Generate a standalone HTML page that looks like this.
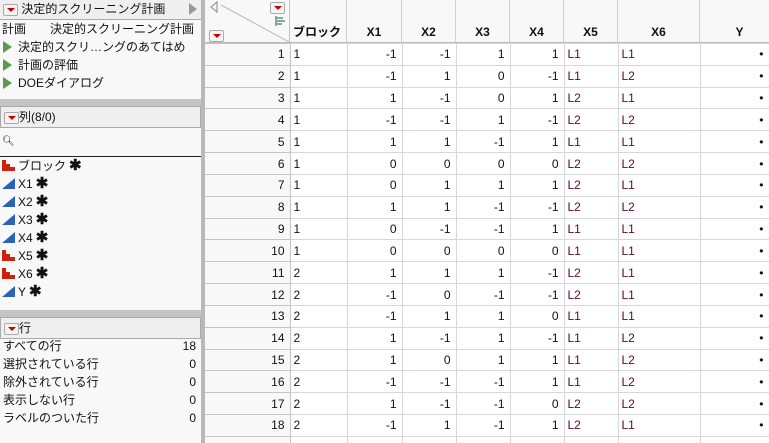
<!DOCTYPE html>
<html><head><meta charset="utf-8"><style>
*{margin:0;padding:0;box-sizing:border-box}
html{width:769px;height:443px;overflow:hidden}
body{width:769px;height:443px;overflow:hidden;background:#f8f8f8;font-family:"Liberation Sans","Noto Sans CJK JP",sans-serif;font-size:12px;color:#111;position:relative}
.abs{position:absolute}
.tri{display:inline-block;width:15px;height:12px;border:1px solid #aaa;border-radius:2px;background:#f4f4f4;position:relative;vertical-align:middle}
.tri:after{content:"";position:absolute;left:3px;top:3px;border-left:4px solid transparent;border-right:4px solid transparent;border-top:4.5px solid #c00}
.hdr{background:#efefef;border-bottom:1px solid #aaa;height:21px;line-height:20px;padding-left:3px;font-size:12px}
.gt{display:inline-block;width:0;height:0;border-top:6px solid transparent;border-bottom:6px solid transparent;border-left:9px solid #5a9a4a;margin:0 6px 0 3px;vertical-align:-2px}
.cl{height:18px;line-height:18px;white-space:nowrap}
.bar{display:inline-block;width:13px;height:11px;position:relative;vertical-align:-1px;margin-right:3px}
.cont{display:inline-block;width:0;height:0;border-left:13px solid transparent;border-bottom:11px solid #2a62b8;vertical-align:-1px;margin-right:3px}
.star{font-weight:bold;font-size:15px;margin-left:3px}
.wrap{position:absolute;left:205px;top:43px;width:564px;height:400px;overflow:hidden}
table{border-collapse:collapse;table-layout:fixed;width:576px}
td{height:21.83px;border:1px solid #d6d6dc;padding:0 5px;text-align:right;background:#fff;white-space:nowrap;overflow:hidden}
td.rn{background:#f8f8f8;border-color:#c4c4c4;border-left:none}
td.l{text-align:left;padding-left:3px}
td.n{color:#5a0a2a;text-align:left;padding-left:3px}
.ch{position:absolute;top:0;height:43px;border-right:1px solid #d0d0d0;font-weight:bold;text-align:center;line-height:14px;padding-top:25px;background:#f8f8f8}
</style></head><body>
<div class="abs" style="left:0;top:0;width:201px;height:443px;background:#f8f8f8">
 <div class="hdr" style="height:20px;line-height:19px"><span class="tri"></span> 決定的スクリーニング計画<span style="position:absolute;left:189px;top:3px;width:0;height:0;border-top:6px solid transparent;border-bottom:6px solid transparent;border-left:8px solid #999"></span></div>
 <div class="cl" style="padding-left:2px">計画<span style="margin-left:24px">決定的スクリーニング計画</span></div>
 <div class="cl"><span class="gt"></span>決定的スクリ…ングのあてはめ</div>
 <div class="cl"><span class="gt"></span>計画の評価</div>
 <div class="cl"><span class="gt"></span>DOEダイアログ</div>
 <div class="abs" style="left:0;top:99px;width:201px;height:7px;background:#c4c4c4"></div>
 <div class="abs hdr" style="left:0;top:106px;width:201px;height:22px;border:1px solid #aaa;line-height:20px"><span class="tri"></span>列(8/0)</div>
 <div class="abs" style="left:2px;top:136px;font-size:10px">&#x1F50D;&#xFE0E;</div>
 <div class="abs" style="left:0;top:156px;width:201px;border-top:1px solid #222"></div>
 <div class="abs" style="left:2px;top:157px">
  <div class="cl"><span class="bar"><i style="position:absolute;left:0;bottom:0;width:4px;height:11px;background:#d02010"></i><i style="position:absolute;left:4px;bottom:0;width:4px;height:7px;background:#d02010"></i><i style="position:absolute;left:8px;bottom:0;width:5px;height:4px;background:#d02010"></i></span>ブロック<span class="star">✱</span></div>
  <div class="cl"><span class="cont"></span>X1<span class="star">✱</span></div>
  <div class="cl"><span class="cont"></span>X2<span class="star">✱</span></div>
  <div class="cl"><span class="cont"></span>X3<span class="star">✱</span></div>
  <div class="cl"><span class="cont"></span>X4<span class="star">✱</span></div>
  <div class="cl"><span class="bar"><i style="position:absolute;left:0;bottom:0;width:4px;height:11px;background:#d02010"></i><i style="position:absolute;left:4px;bottom:0;width:4px;height:7px;background:#d02010"></i><i style="position:absolute;left:8px;bottom:0;width:5px;height:4px;background:#d02010"></i></span>X5<span class="star">✱</span></div>
  <div class="cl"><span class="bar"><i style="position:absolute;left:0;bottom:0;width:4px;height:11px;background:#d02010"></i><i style="position:absolute;left:4px;bottom:0;width:4px;height:7px;background:#d02010"></i><i style="position:absolute;left:8px;bottom:0;width:5px;height:4px;background:#d02010"></i></span>X6<span class="star">✱</span></div>
  <div class="cl"><span class="cont"></span>Y<span class="star">✱</span></div>
 </div>
 <div class="abs" style="left:0;top:310px;width:201px;height:7px;background:#c4c4c4"></div>
 <div class="abs hdr" style="left:0;top:317px;width:201px;height:22px;border:1px solid #aaa;line-height:20px"><span class="tri"></span>行</div>
 <div class="abs" style="left:3px;top:337px;width:193px">
  <div class="cl" style="display:flex;justify-content:space-between"><span>すべての行</span><span>18</span></div>
  <div class="cl" style="display:flex;justify-content:space-between"><span>選択されている行</span><span>0</span></div>
  <div class="cl" style="display:flex;justify-content:space-between"><span>除外されている行</span><span>0</span></div>
  <div class="cl" style="display:flex;justify-content:space-between"><span>表示しない行</span><span>0</span></div>
  <div class="cl" style="display:flex;justify-content:space-between"><span>ラベルのついた行</span><span>0</span></div>
 </div>
</div>
<div class="abs" style="left:201px;top:0;width:4px;height:443px;background:#b8b8b8"></div>
<div class="ch" style="left:205px;width:85px;border-right:1px solid #c4c4c4">
 <svg style="position:absolute;left:0;top:0" width="85" height="43"><line x1="16" y1="5" x2="84" y2="42" stroke="#bbb"/><path d="M12 2 L6 7 L12 12 Z" fill="none" stroke="#888"/><rect x="70" y="16" width="2" height="10" fill="#8a9"/><rect x="72" y="17" width="6" height="2" fill="#8a9"/><rect x="72" y="20" width="8" height="2" fill="#8a9"/><rect x="72" y="23" width="5" height="2" fill="#8a9"/></svg>
 <span class="tri" style="position:absolute;left:65px;top:2px"></span><span class="tri" style="position:absolute;left:4px;top:30px"></span>
</div>
<div class="ch" style="left:290px;width:57px;text-align:left;padding-left:3px">ブロック</div>
<div class="ch" style="left:347px;width:55px">X1</div>
<div class="ch" style="left:402px;width:54px">X2</div>
<div class="ch" style="left:456px;width:54px">X3</div>
<div class="ch" style="left:510px;width:54px">X4</div>
<div class="ch" style="left:564px;width:54px">X5</div>
<div class="ch" style="left:618px;width:82px">X6</div>
<div class="ch" style="left:700px;width:80px">Y</div>
<div class="abs" style="left:205px;top:42px;width:564px;border-top:1px solid #bbb"></div>
<div class="wrap"><table>
<colgroup><col style="width:85px"><col style="width:57px"><col style="width:55px"><col style="width:54px"><col style="width:54px"><col style="width:54px"><col style="width:54px"><col style="width:82px"><col style="width:81px"></colgroup>
<tr><td class="rn">1</td><td class="l">1</td><td>-1</td><td>-1</td><td>1</td><td>1</td><td class="n">L1</td><td class="n">L1</td><td style="padding-right:17px">•</td></tr>
<tr><td class="rn">2</td><td class="l">1</td><td>-1</td><td>1</td><td>0</td><td>-1</td><td class="n">L1</td><td class="n">L2</td><td style="padding-right:17px">•</td></tr>
<tr><td class="rn">3</td><td class="l">1</td><td>1</td><td>-1</td><td>0</td><td>1</td><td class="n">L2</td><td class="n">L1</td><td style="padding-right:17px">•</td></tr>
<tr><td class="rn">4</td><td class="l">1</td><td>-1</td><td>-1</td><td>1</td><td>-1</td><td class="n">L2</td><td class="n">L2</td><td style="padding-right:17px">•</td></tr>
<tr><td class="rn">5</td><td class="l">1</td><td>1</td><td>1</td><td>-1</td><td>1</td><td class="n">L1</td><td class="n">L1</td><td style="padding-right:17px">•</td></tr>
<tr><td class="rn">6</td><td class="l">1</td><td>0</td><td>0</td><td>0</td><td>0</td><td class="n">L2</td><td class="n">L2</td><td style="padding-right:17px">•</td></tr>
<tr><td class="rn">7</td><td class="l">1</td><td>0</td><td>1</td><td>1</td><td>1</td><td class="n">L2</td><td class="n">L1</td><td style="padding-right:17px">•</td></tr>
<tr><td class="rn">8</td><td class="l">1</td><td>1</td><td>1</td><td>-1</td><td>-1</td><td class="n">L2</td><td class="n">L2</td><td style="padding-right:17px">•</td></tr>
<tr><td class="rn">9</td><td class="l">1</td><td>0</td><td>-1</td><td>-1</td><td>1</td><td class="n">L1</td><td class="n">L1</td><td style="padding-right:17px">•</td></tr>
<tr><td class="rn">10</td><td class="l">1</td><td>0</td><td>0</td><td>0</td><td>0</td><td class="n">L1</td><td class="n">L1</td><td style="padding-right:17px">•</td></tr>
<tr><td class="rn">11</td><td class="l">2</td><td>1</td><td>1</td><td>1</td><td>-1</td><td class="n">L2</td><td class="n">L1</td><td style="padding-right:17px">•</td></tr>
<tr><td class="rn">12</td><td class="l">2</td><td>-1</td><td>0</td><td>-1</td><td>-1</td><td class="n">L2</td><td class="n">L1</td><td style="padding-right:17px">•</td></tr>
<tr><td class="rn">13</td><td class="l">2</td><td>-1</td><td>1</td><td>1</td><td>0</td><td class="n">L1</td><td class="n">L1</td><td style="padding-right:17px">•</td></tr>
<tr><td class="rn">14</td><td class="l">2</td><td>1</td><td>-1</td><td>1</td><td>-1</td><td class="n">L1</td><td class="n">L2</td><td style="padding-right:17px">•</td></tr>
<tr><td class="rn">15</td><td class="l">2</td><td>1</td><td>0</td><td>1</td><td>1</td><td class="n">L1</td><td class="n">L2</td><td style="padding-right:17px">•</td></tr>
<tr><td class="rn">16</td><td class="l">2</td><td>-1</td><td>-1</td><td>-1</td><td>1</td><td class="n">L1</td><td class="n">L2</td><td style="padding-right:17px">•</td></tr>
<tr><td class="rn">17</td><td class="l">2</td><td>1</td><td>-1</td><td>-1</td><td>0</td><td class="n">L2</td><td class="n">L2</td><td style="padding-right:17px">•</td></tr>
<tr><td class="rn">18</td><td class="l">2</td><td>-1</td><td>1</td><td>-1</td><td>1</td><td class="n">L2</td><td class="n">L1</td><td style="padding-right:17px">•</td></tr>
<tr><td class="rn"></td><td></td><td></td><td></td><td></td><td></td><td></td><td></td><td></td></tr>
</table></div>
</body></html>
